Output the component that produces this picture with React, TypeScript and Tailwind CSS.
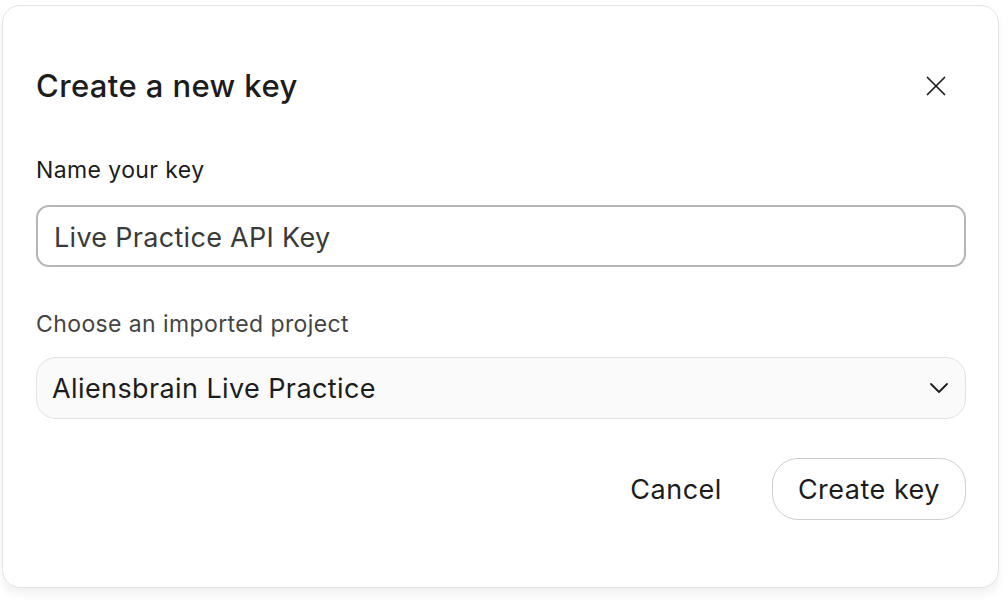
import { X } from "lucide-react";

export default function App() {
  return (
    <div className="w-[1008px] h-[600px] bg-white p-[5px_9px_12px_2px] font-['Inter',sans-serif]">
      <div className="h-full rounded-[18px] border border-[#e4e4e4] bg-white shadow-[0_6px_10px_rgba(0,0,0,0.06)] pl-[33px] pr-[32px] pt-[62px]">
        <div className="flex items-center justify-between">
          <h2 className="text-[31px] leading-[36px] font-medium text-[#1c1c1c] tracking-[0.4px]">Create a new key</h2>
          <button className="mr-[13px] text-[#1c1c1c]">
            <X size={34} strokeWidth={1.2} />
          </button>
        </div>

        <label className="block mt-[52px] text-[23px] leading-[28px] tracking-[0.4px] text-[#1c1c1c]">Name your key</label>
        <div className="mt-[21px] h-[62px] rounded-[13px] border-2 border-[#b5b5b5] flex items-center pl-[16px] pr-[16px] pt-[4px]">
          <span className="text-[27px] tracking-[0.3px] text-[#3a3a3a]">Live Practice API Key</span>
        </div>

        <label className="block mt-[43px] text-[23px] leading-[28px] tracking-[0.4px] text-[#444]">Choose an imported project</label>
        <div className="mt-[19px] h-[62px] rounded-[20px] border border-[#e2e2e2] bg-[#fafafa] flex items-center justify-between pl-[15px] pr-[16px]">
          <span className="text-[27px] tracking-[0.4px] text-[#1c1c1c] pt-[3px]">Aliensbrain Live Practice</span>
          <svg width="20" height="12" viewBox="0 0 20 12" fill="none" stroke="#1c1c1c" strokeWidth="1.8" strokeLinecap="round" strokeLinejoin="round">
            <polyline points="2 2 10 10 18 2" />
          </svg>
        </div>

        <div className="mt-[39px] flex items-center justify-end gap-[50px]">
          <button className="text-[27px] tracking-[0.5px] text-[#1c1c1c] pt-[3px]">Cancel</button>
          <button className="h-[62px] px-[25px] pt-[3px] rounded-[26px] border border-[#cfcfcf] text-[27px] tracking-[0.5px] text-[#1c1c1c]">Create key</button>
        </div>
      </div>
    </div>
  );
}
